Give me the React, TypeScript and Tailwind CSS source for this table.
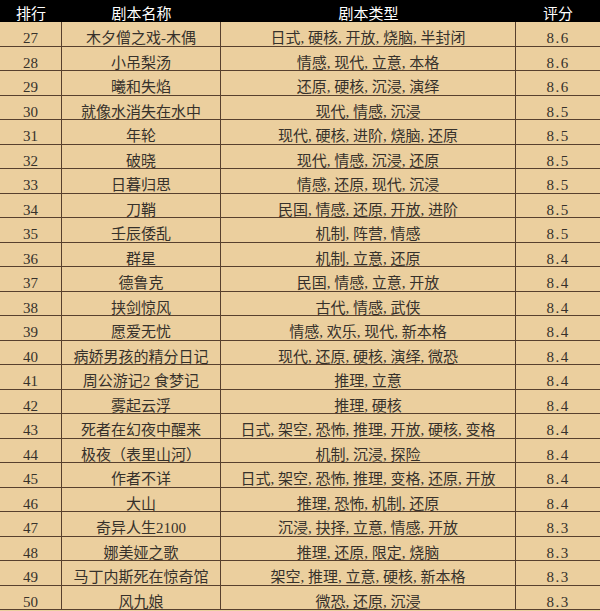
import React from 'react';

type Script = {
  rank: number;
  name: string;
  tags: string[];
  score: string;
};

const scripts: Script[] = [
  { rank: 27, name: '木夕僧之戏-木偶', tags: ['日式', '硬核', '开放', '烧脑', '半封闭'], score: '8.6' },
  { rank: 28, name: '小吊梨汤', tags: ['情感', '现代', '立意', '本格'], score: '8.6' },
  { rank: 29, name: '曦和失焰', tags: ['还原', '硬核', '沉浸', '演绎'], score: '8.6' },
  { rank: 30, name: '就像水消失在水中', tags: ['现代', '情感', '沉浸'], score: '8.5' },
  { rank: 31, name: '年轮', tags: ['现代', '硬核', '进阶', '烧脑', '还原'], score: '8.5' },
  { rank: 32, name: '破晓', tags: ['现代', '情感', '沉浸', '还原'], score: '8.5' },
  { rank: 33, name: '日暮归思', tags: ['情感', '还原', '现代', '沉浸'], score: '8.5' },
  { rank: 34, name: '刀鞘', tags: ['民国', '情感', '还原', '开放', '进阶'], score: '8.5' },
  { rank: 35, name: '壬辰倭乱', tags: ['机制', '阵营', '情感'], score: '8.5' },
  { rank: 36, name: '群星', tags: ['机制', '立意', '还原'], score: '8.4' },
  { rank: 37, name: '德鲁克', tags: ['民国', '情感', '立意', '开放'], score: '8.4' },
  { rank: 38, name: '挟剑惊风', tags: ['古代', '情感', '武侠'], score: '8.4' },
  { rank: 39, name: '愿爱无忧', tags: ['情感', '欢乐', '现代', '新本格'], score: '8.4' },
  { rank: 40, name: '病娇男孩的精分日记', tags: ['现代', '还原', '硬核', '演绎', '微恐'], score: '8.4' },
  { rank: 41, name: '周公游记2 食梦记', tags: ['推理', '立意'], score: '8.4' },
  { rank: 42, name: '雾起云浮', tags: ['推理', '硬核'], score: '8.4' },
  { rank: 43, name: '死者在幻夜中醒来', tags: ['日式', '架空', '恐怖', '推理', '开放', '硬核', '变格'], score: '8.4' },
  { rank: 44, name: '极夜（表里山河）', tags: ['机制', '沉浸', '探险'], score: '8.4' },
  { rank: 45, name: '作者不详', tags: ['日式', '架空', '恐怖', '推理', '变格', '还原', '开放'], score: '8.4' },
  { rank: 46, name: '大山', tags: ['推理', '恐怖', '机制', '还原'], score: '8.4' },
  { rank: 47, name: '奇异人生2100', tags: ['沉浸', '抉择', '立意', '情感', '开放'], score: '8.3' },
  { rank: 48, name: '娜美娅之歌', tags: ['推理', '还原', '限定', '烧脑'], score: '8.3' },
  { rank: 49, name: '马丁内斯死在惊奇馆', tags: ['架空', '推理', '立意', '硬核', '新本格'], score: '8.3' },
  { rank: 50, name: '风九娘', tags: ['微恐', '还原', '沉浸'], score: '8.3' },
];

const cols = 'grid grid-cols-[62px_159px_295px_84px]';
const cell = 'border-r border-[#57402e] pt-[8px] text-center leading-[16px] whitespace-nowrap';

const App: React.FC = () => {
  return (
    <div
      className="w-[600px] h-[611px] overflow-hidden bg-[#ebcf9e] text-[#36312b] text-[15px]"
      style={{ fontFamily: '"Liberation Serif", "Noto Sans CJK SC", serif' }}
    >
      {/* Header */}
      <div className={`${cols} h-[22px] bg-black text-white`}>
        <div className="pt-[6px] text-center leading-[16px]">排行</div>
        <div className="pt-[6px] text-center leading-[16px]">剧本名称</div>
        <div className="pt-[6px] text-center leading-[16px]">剧本类型</div>
        <div className="pt-[6px] text-center leading-[16px]">评分</div>
      </div>

      {/* Rows */}
      {scripts.map((s) => (
        <div key={s.rank} className={`${cols} h-[24.5px] border-b border-[#57402e]`}>
          <div className={cell}>{s.rank}</div>
          <div className={cell}>{s.name}</div>
          <div className={cell}>{s.tags.join(', ')}</div>
          <div className="pt-[8px] text-center leading-[16px] tracking-[1.5px]">{s.score}</div>
        </div>
      ))}
    </div>
  );
};

export default App;
